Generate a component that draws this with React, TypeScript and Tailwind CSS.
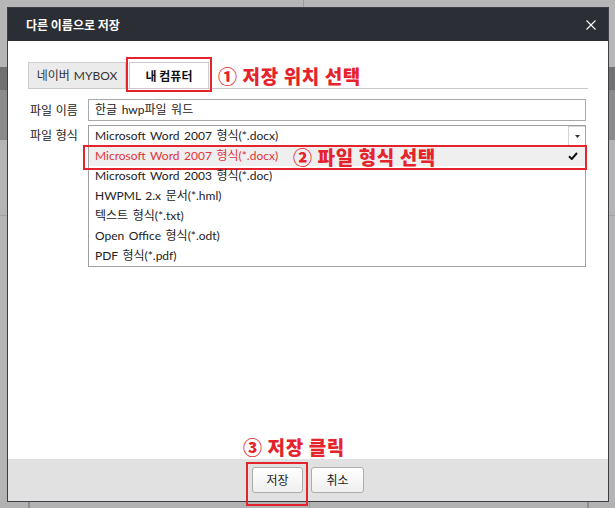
import React from "react";

const KFONT = "font-['Noto_Sans_CJK_KR','Noto_Sans',sans-serif]";
const LFONT = "font-['Lato','Noto_Sans_CJK_KR',sans-serif]";

const items = [
  "Microsoft Word 2007 형식(*.docx)",
  "Microsoft Word 2003 형식(*.doc)",
  "HWPML 2.x 문서(*.hml)",
  "텍스트 형식(*.txt)",
  "Open Office 형식(*.odt)",
  "PDF 형식(*.pdf)",
];

export default function App() {
  return (
    <div className={`relative w-[615px] h-[508px] overflow-hidden bg-[#b4b4b4] ${KFONT}`}>
      {/* background page behind the modal */}
      <div className="flex flex-col w-full h-full">
        <div className="flex h-[67px] bg-[#b6b6b6]">
          <div className="w-[304px] border-r border-[#9c9c9c]" />
          <div className="flex-1" />
        </div>
        <div className="h-[23px] bg-[#717171]" />
        <div className="h-[50px] bg-[#8b8b8b]" />
        <div className="h-[76px] bg-[#b4b4b4] border-b border-[#a2a2a2]" />
        <div className="flex-1 bg-[#b4b4b4]" />
        <div className="flex h-[7px] bg-[#b2b2b2]">
          <div className="w-[30px] border-r-2 border-[#8e8e8e]" />
          <div className="w-[280px] border-r border-[#9a9a9a]" />
          <div className="w-[279px] border-r-2 border-[#8e8e8e]" />
          <div className="flex-1" />
        </div>
      </div>

      {/* modal dialog */}
      <div className="absolute left-[7px] top-[7px] w-[602px] h-[495px] border border-[#3b3e45] bg-white flex flex-col">
        {/* header */}
        <div className="h-[33px] bg-[#2b2e35] flex items-center justify-between pl-[18px] pr-[12px]">
          <span className="text-[12px] font-bold text-white leading-none">다른 이름으로 저장</span>
          <svg width="10" height="10" viewBox="0 0 10 10" className="block">
            <path d="M0.5 0.5 L9.5 9.5 M9.5 0.5 L0.5 9.5" stroke="#ffffff" strokeWidth="1.1" fill="none" />
          </svg>
        </div>

        {/* body */}
        <div className="relative flex-1 pl-[20px] pr-[20px] pt-[21px]">
          {/* tabs */}
          <div className="flex items-end border-b border-[#c9c9c9] h-[27px]">
            <div className={`${LFONT} h-[26px] w-[98px] flex items-center justify-center bg-[#ebebeb] border border-b-0 border-[#cdcdcd] text-[12px] text-[#333] [word-spacing:1px]`}>
              네이버 MYBOX
            </div>
            <div className="relative ml-[3px] h-[26px] w-[80px] flex items-center justify-center bg-white border border-b-0 border-[#cdcdcd]">
              <span className="text-[12px] font-bold text-[#111]">내 컴퓨터</span>
              <div className="absolute -left-[4px] -top-[6px] -right-[4px] -bottom-[4px] border-2 border-[#e5232c]" />
            </div>
            <span className="self-center ml-[9px] text-[19px] font-black text-[#e5232c] leading-none tracking-[0.6px] whitespace-nowrap">
              ① 저장 위치 선택
            </span>
          </div>

          {/* file name row */}
          <div className="flex mt-[10px]">
            <div className="w-[60px] pl-[2px] h-[22px] flex items-center text-[12px] text-[#222] [word-spacing:1px]">파일 이름</div>
            <div className="w-[498px] h-[22px] border border-[#a9a9a9] flex items-center pl-[6px]">
              <span className={`${LFONT} text-[12px] text-[#222] [word-spacing:1.5px]`}>한글 hwp파일 워드</span>
            </div>
          </div>

          {/* file type row */}
          <div className="flex mt-[4px]">
            <div className="w-[60px] pl-[2px] h-[20px] flex items-center text-[12px] text-[#222] [word-spacing:1px]">파일 형식</div>
            <div className="w-[498px] border border-[#a0a0a0] flex flex-col">
              <div className="h-[20px] flex items-center">
                <span className={`${LFONT} flex-1 pl-[6px] text-[12px] text-[#222] whitespace-nowrap [word-spacing:1.5px]`}>{items[0]}</span>
                <div className="w-[17px] h-[20px] border-l border-t border-[#d4d4d4] flex items-center justify-center">
                  <svg width="5" height="3" viewBox="0 0 5 3" className="block">
                    <path d="M0 0 L5 0 L2.5 3 Z" fill="#333" />
                  </svg>
                </div>
              </div>
              {items.map((it, i) => (
                <div
                  key={i}
                  className={`relative h-[20px] flex items-center pl-[6px] pr-[7px] ${i === 0 ? "bg-[#efefef]" : ""}`}
                >
                  <span className={`${LFONT} text-[12px] whitespace-nowrap [word-spacing:1.5px] ${i === 0 ? "text-[#e2323b]" : "text-[#222]"}`}>{it}</span>
                  {i === 0 && (
                    <>
                      <svg width="10" height="8" viewBox="0 0 10 8" className="block ml-auto">
                        <path d="M1 4.2 L3.8 7 L9 1" stroke="#111" strokeWidth="2" fill="none" />
                      </svg>
                      <span className="absolute left-[204px] top-1/2 -translate-y-1/2 text-[19px] font-black text-[#e5232c] leading-none tracking-[0.6px] whitespace-nowrap">
                        ② 파일 형식 선택
                      </span>
                      <div className="absolute -left-[6px] -top-[1px] -right-[2px] -bottom-[4px] border-2 border-[#e5232c]" />
                    </>
                  )}
                </div>
              ))}
            </div>
          </div>

          <span className="absolute left-[235px] top-[396px] text-[19px] font-black text-[#e5232c] leading-none tracking-[0.6px] whitespace-nowrap">
            ③ 저장 클릭
          </span>
        </div>

        {/* footer */}
        <div className="h-[42px] bg-[#e1e1e1] flex justify-center gap-[8px] pt-[8px]">
          <div className="relative">
            <button className="w-[51px] h-[26px] rounded-[3px] border border-[#adadad] bg-gradient-to-b from-white to-[#efefef] text-[12px] text-[#222] flex items-center justify-center">
              저장
            </button>
            <div className="absolute -left-[6px] -top-[5px] -right-[5px] -bottom-[5px] border-2 border-[#e5232c]" />
          </div>
          <button className="w-[53px] h-[26px] rounded-[3px] border border-[#adadad] bg-gradient-to-b from-white to-[#efefef] text-[12px] text-[#222] flex items-center justify-center">
            취소
          </button>
        </div>
      </div>
    </div>
  );
}
